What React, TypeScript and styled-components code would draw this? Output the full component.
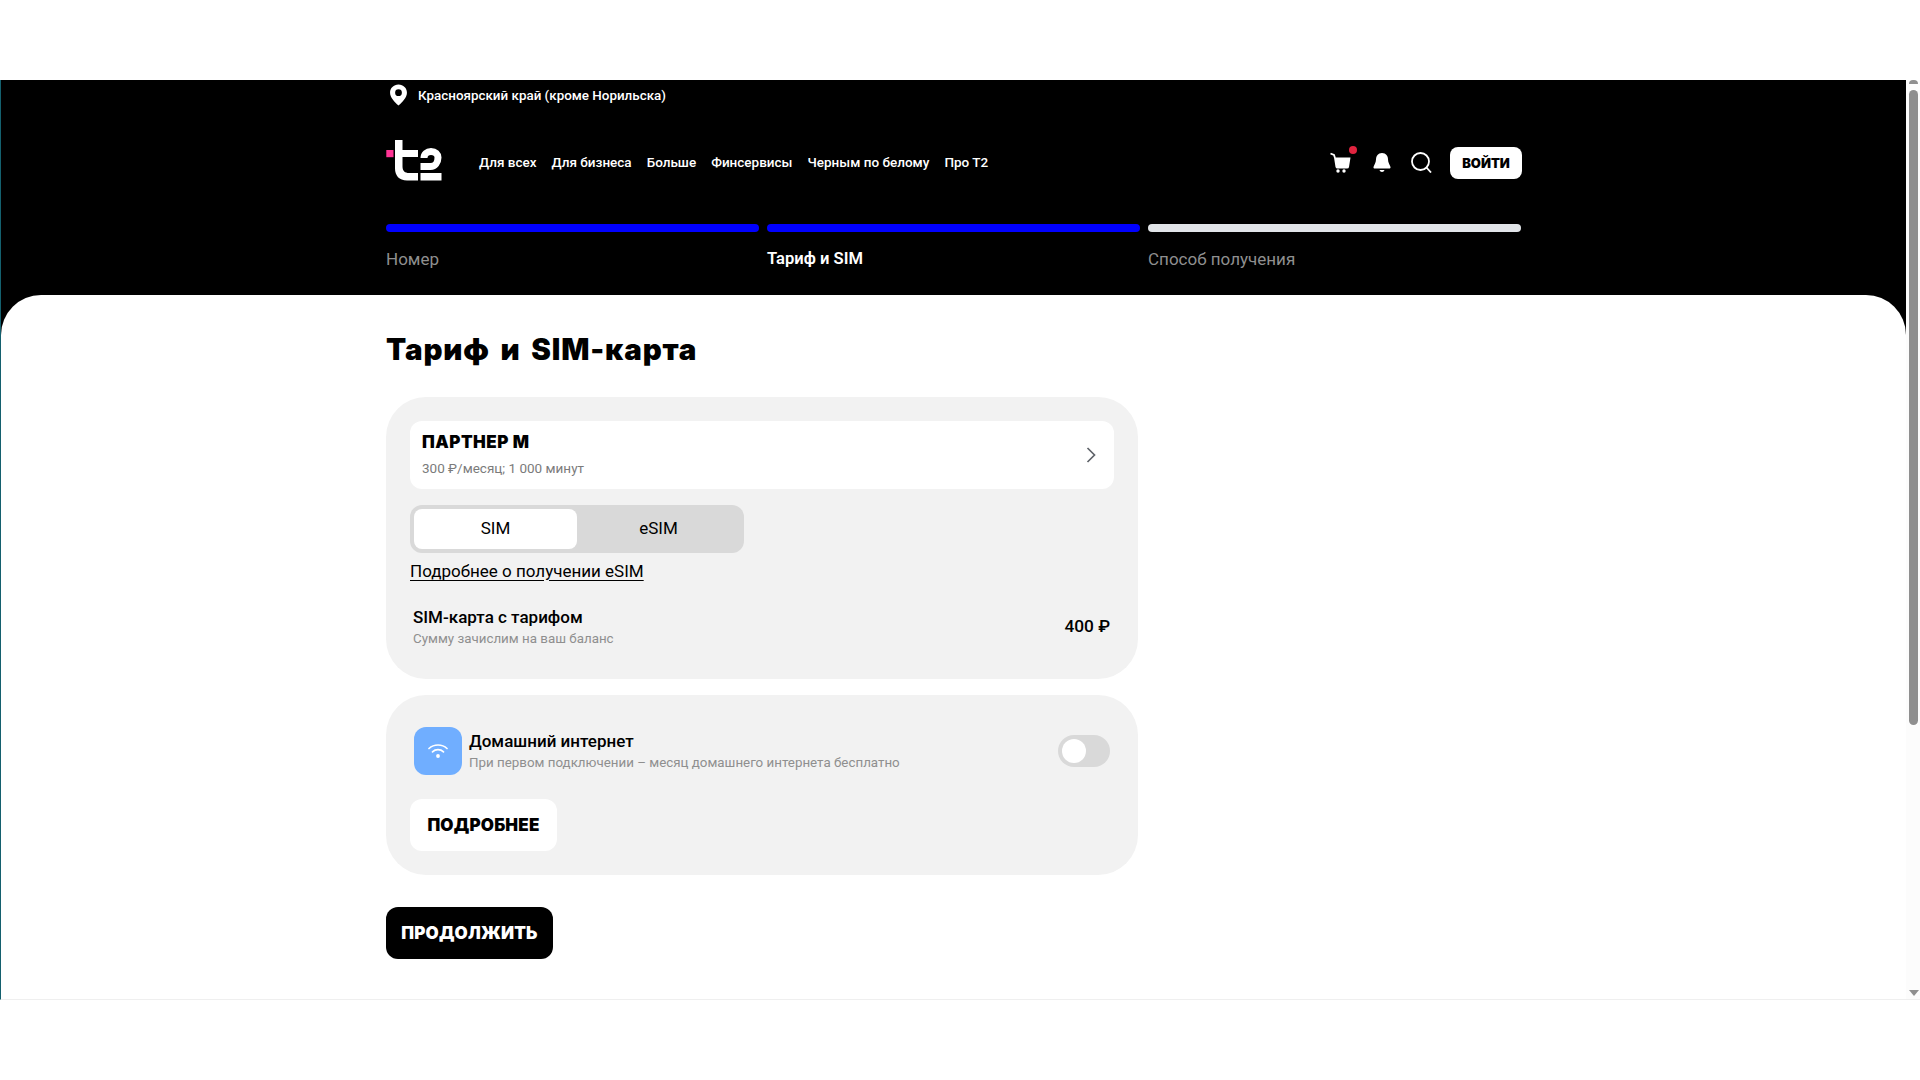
import { FunctionComponent } from "react";
import styled, { createGlobalStyle } from "styled-components";

const GlobalStyle = createGlobalStyle`
  html, body {
    margin: 0;
    padding: 0;
    height: 100%;
    background: #ffffff;
    overflow: hidden;
  }
  * {
    box-sizing: border-box;
  }
`;

const NAV_ITEMS = ["Для всех", "Для бизнеса", "Больше", "Финсервисы", "Черным по белому", "Про Т2"];

const STEPS = [
  { label: "Номер", done: true, current: false },
  { label: "Тариф и SIM", done: true, current: true },
  { label: "Способ получения", done: false, current: false },
];

const PinIcon = () => (
  <svg width="19" height="22" viewBox="0 0 18 20">
    <path
      fillRule="evenodd"
      fill="#fff"
      d="M9 0c4.6 0 8 3.4 8 7.8 0 4.4-4.3 8.7-8 12.2C5.3 16.500 1 12.200 1 7.800 1 3.400 4.400 0 9 0zm0 4.600a3.200 3.200 0 1 0 0 6.400 3.200 3.200 0 0 0 0-6.400z"
    />
  </svg>
);

const Logo = () => (
  <svg width="56" height="41" viewBox="0 0 56 41">
    <rect x="0.300" y="10" width="7.200" height="7.200" fill="#ff3495" />
    <path
      fill="#fff"
      d="M9 0h7.500v10h15.500v7H16.500v9.500c0 4.500 2.500 6.500 6.500 6.500h9v7.500H21c-8 0-12-5-12-12z"
    />
    <path
      fill="none"
      stroke="#fff"
      strokeWidth="7"
      d="M38 18c0-4 3-6.500 7-6.500 4.500 0 7 2.700 7 6 0 5-3 9-7.500 9H34.500"
    />
    <rect x="34.500" y="33" width="21" height="7.500" fill="#fff" />
  </svg>
);

const CartIcon = () => (
  <svg width="21" height="21" viewBox="0 0 21 21">
    <path fill="none" stroke="#fff" strokeWidth="1.800" d="M0.500 1.500l3.500 1.500 1 3" />
    <path fill="#fff" d="M4 5.500h16.500l-1.500 9.500q-.2 1.500-2 1.500H7.500q-1.600 0-2-1.500z" />
    <circle cx="8" cy="19" r="1.700" fill="#fff" />
    <circle cx="14" cy="19" r="1.700" fill="#fff" />
  </svg>
);

const BellIcon = () => (
  <svg width="18" height="20" viewBox="0 0 18 20">
    <path
      fill="#fff"
      d="M9 0c4 0 6 3 6 6.500 0 3.500 2 5.500 2.500 7.500.2 1-.5 1.500-1.500 1.500H2c-1 0-1.700-.5-1.500-1.500C1 12 3 10 3 6.500 3 3 5 0 9 0z"
    />
    <path fill="#fff" d="M6.500 17h5c-.3 1.300-1.300 2-2.500 2s-2.200-.7-2.500-2z" />
  </svg>
);

const SearchIcon = () => (
  <svg width="21" height="21" viewBox="0 0 21 21">
    <circle cx="9.500" cy="9.500" r="8.500" fill="none" stroke="#fff" strokeWidth="1.800" />
    <path fill="none" stroke="#fff" strokeWidth="1.800" d="M15.500 15.500l4.500 5" />
  </svg>
);

const ChevronIcon = () => (
  <svg width="10" height="16" viewBox="0 0 10 16">
    <path fill="none" stroke="#5f6369" strokeWidth="1.700" d="M1.500 1l7 7-7 7" />
  </svg>
);

const WifiIcon = () => (
  <svg width="20" height="16" viewBox="0 0 20 16">
    <g fill="none" stroke="#fff" strokeWidth="1.700" strokeLinecap="round">
      <path d="M1 5.500c5-4.700 13-4.700 18 0" />
      <path d="M4.500 8.800c3-2.800 8-2.800 11 0" />
    </g>
    <circle cx="10" cy="13" r="1.900" fill="#fff" />
  </svg>
);

const Strip = styled.div`
  height: 80px;
`;

const Window = styled.div`
  display: flex;
  height: 920px;
  border-left: 1px solid #14606e;
  border-bottom: 1px solid #efefef;
  overflow: hidden;
`;

const Page = styled.div`
  flex: 1;
  display: flex;
  flex-direction: column;
  background: #000000;
  font-family: Roboto, "Noto Sans", sans-serif;
`;

const ScrollTrack = styled.div`
  width: 14px;
  background: #fcfcfc;
  display: flex;
  flex-direction: column;
  align-items: center;
  padding-left: 1px;
`;

const ScrollUp = styled.div`
  width: 9px;
  height: 4px;
  border-radius: 4px 4px 0 0;
  background: #8f8f8f;
`;

const ScrollThumb = styled.div`
  width: 9px;
  height: 635px;
  margin-top: 6px;
  border-radius: 5px;
  background: #8f8f8f;
`;

const ScrollDown = styled.div`
  margin-top: 265px;
  width: 0;
  height: 0;
  border-left: 5px solid transparent;
  border-right: 5px solid transparent;
  border-top: 6px solid #8f8f8f;
`;

const Header = styled.header`
  height: 215px;
  padding-left: 385px;
  width: 1521px;
  color: #ffffff;
`;

const RegionRow = styled.div`
  display: flex;
  align-items: center;
  gap: 10px;
  height: 30px;
  padding-left: 3px;
  font-size: 13.400px;
  font-weight: 500;
`;

const TopBar = styled.div`
  display: flex;
  align-items: center;
  height: 45px;
  margin-top: 30px;
`;

const LogoLink = styled.a`
  display: flex;
  align-self: flex-start;
  width: 93px;
`;

const Nav = styled.nav`
  display: flex;
  gap: 15px;
  padding-bottom: 2px;
  font-size: 13.500px;
  font-weight: 500;
`;

const Actions = styled.div`
  display: flex;
  align-items: center;
  margin-left: auto;
  gap: 20px;
`;

const IconButton = styled.span`
  position: relative;
  display: flex;

  &:first-child {
    margin-right: 2px;
  }
`;

const Badge = styled.span`
  position: absolute;
  top: -6px;
  right: -6px;
  width: 8px;
  height: 8px;
  border-radius: 50%;
  background: #e0243f;
`;

const LoginButton = styled.button`
  width: 72px;
  height: 32px;
  margin-left: -2px;
  border: 0;
  border-radius: 8px;
  background: #ffffff;
  color: #000000;
  font-family: Inter, sans-serif;
  font-size: 13px;
  font-weight: 900;
  padding: 0;
`;

const Steps = styled.div`
  display: grid;
  grid-template-columns: repeat(3, 373px);
  gap: 8px;
  margin-top: 39px;
`;

const Step = styled.div`
  display: flex;
  flex-direction: column;
  gap: 17px;
`;

const StepBar = styled.div<{ $done: boolean }>`
  height: 8px;
  border-radius: 4px;
  background: ${({ $done }) => ($done ? "#0000ff" : "#e1e4e8")};
`;

const StepLabel = styled.div<{ $current: boolean }>`
  font-size: ${({ $current }) => ($current ? "16.600px" : "17px")};
  line-height: 20px;
  font-weight: ${({ $current }) => ($current ? 600 : 400)};
  color: ${({ $current }) => ($current ? "#ffffff" : "#8f8f8f")};
`;

const Panel = styled.main`
  flex: 1;
  background: #ffffff;
  border-radius: 40px 40px 0 0;
  padding: 36px 0 0 385px;
  color: #000000;
`;

const Title = styled.h1`
  margin: 0;
  height: 38px;
  font-family: Inter, sans-serif;
  font-size: 29.500px;
  line-height: 36px;
  font-weight: 900;
  letter-spacing: 0.850px;
  word-spacing: 4px;
`;

const Card = styled.section`
  width: 752px;
  margin-top: 16px;
  padding: 24px;
  border-radius: 40px;
  background: #f2f2f2;
`;

const FirstCard = styled(Card)`
  height: 282px;
  margin-top: 28px;
`;

const SecondCard = styled(Card)`
  height: 180px;
  padding-top: 32px;
`;

const TariffCard = styled.div`
  display: flex;
  align-items: center;
  justify-content: space-between;
  height: 68px;
  padding: 0 18px 0 12px;
  border-radius: 12px;
  background: #ffffff;
`;

const TariffHead = styled.div`
  padding-bottom: 3px;
`;

const TariffName = styled.div`
  font-family: Inter, sans-serif;
  font-size: 17px;
  line-height: 20px;
  font-weight: 900;
  letter-spacing: 0.500px;
`;

const TariffInfo = styled.div`
  margin-top: 8px;
  font-size: 13.500px;
  line-height: 16px;
  color: #7b7b7b;
`;

const SimSwitch = styled.div`
  display: grid;
  grid-template-columns: 163px 163px;
  width: 334px;
  height: 48px;
  margin-top: 16px;
  padding: 4px;
  border-radius: 12px;
  background: #d9d9d9;
`;

const SimOption = styled.div<{ $active: boolean }>`
  display: flex;
  align-items: center;
  justify-content: center;
  padding-bottom: 2px;
  border-radius: 8px;
  font-size: 17px;
  background: ${({ $active }) => ($active ? "#ffffff" : "transparent")};
`;

const MoreLink = styled.a`
  display: inline-block;
  margin-top: 7px;
  font-size: 17px;
  line-height: 22px;
  text-decoration: underline;
  text-underline-offset: 3px;
`;

const SimRow = styled.div`
  display: flex;
  align-items: center;
  justify-content: space-between;
  margin-top: 25px;
  padding: 0 4px 0 3px;
`;

const RowTitle = styled.div`
  font-size: 17px;
  line-height: 20px;
  font-weight: 500;
`;

const RowNote = styled.div`
  margin-top: 3px;
  font-size: 13.350px;
  line-height: 18px;
  color: #8f8f8f;
`;

const Price = styled.div`
  padding: 0 0 4px 0;
  font-size: 17.300px;
  font-weight: 500;
`;

const InternetRow = styled.div`
  display: flex;
  align-items: center;
  gap: 7px;
  padding: 0 4px;
`;

const InternetIcon = styled.div`
  display: flex;
  align-items: center;
  justify-content: center;
  flex: none;
  width: 48px;
  height: 48px;
  border-radius: 12px;
  background: #70aeff;
`;

const InternetText = styled.div`
  flex: 1;
`;

const Toggle = styled.div`
  display: flex;
  align-items: center;
  width: 52px;
  height: 32px;
  padding: 0 4px;
  border-radius: 16px;
  background: #d9d9d9;
`;

const Knob = styled.div`
  width: 24px;
  height: 24px;
  border-radius: 50%;
  background: #ffffff;
`;

const ActionButton = styled.button`
  display: block;
  height: 52px;
  border: 0;
  border-radius: 12px;
  padding: 0;
  font-family: Inter, sans-serif;
  font-size: 17px;
  font-weight: 900;
  letter-spacing: 0.200px;
`;

const DetailsButton = styled(ActionButton)`
  width: 147px;
  margin-top: 24px;
  background: #ffffff;
  color: #000000;
`;

const ContinueButton = styled(ActionButton)`
  width: 167px;
  margin-top: 32px;
  background: #000000;
  color: #ffffff;
`;

const Row: FunctionComponent<{ title: string; note: string }> = ({ title, note }) => (
  <div>
    <RowTitle>{title}</RowTitle>
    <RowNote>{note}</RowNote>
  </div>
);

export default function App() {
  return (
    <>
      <GlobalStyle />
      <Strip />
      <Window>
        <Page>
          <Header>
            <RegionRow>
              <PinIcon />
              Красноярский край (кроме Норильска)
            </RegionRow>
            <TopBar>
              <LogoLink>
                <Logo />
              </LogoLink>
              <Nav>
                {NAV_ITEMS.map((item) => (
                  <span key={item}>{item}</span>
                ))}
              </Nav>
              <Actions>
                <IconButton>
                  <CartIcon />
                  <Badge />
                </IconButton>
                <IconButton>
                  <BellIcon />
                </IconButton>
                <IconButton>
                  <SearchIcon />
                </IconButton>
                <LoginButton>ВОЙТИ</LoginButton>
              </Actions>
            </TopBar>
            <Steps>
              {STEPS.map((step) => (
                <Step key={step.label}>
                  <StepBar $done={step.done} />
                  <StepLabel $current={step.current}>{step.label}</StepLabel>
                </Step>
              ))}
            </Steps>
          </Header>
          <Panel>
            <Title>Тариф и SIM-карта</Title>
            <FirstCard>
              <TariffCard>
                <TariffHead>
                  <TariffName>ПАРТНЕР М</TariffName>
                  <TariffInfo>300 ₽/месяц; 1 000 минут</TariffInfo>
                </TariffHead>
                <ChevronIcon />
              </TariffCard>
              <SimSwitch>
                <SimOption $active>SIM</SimOption>
                <SimOption $active={false}>eSIM</SimOption>
              </SimSwitch>
              <MoreLink>Подробнее о получении eSIM</MoreLink>
              <SimRow>
                <Row title="SIM-карта с тарифом" note="Сумму зачислим на ваш баланс" />
                <Price>400 ₽</Price>
              </SimRow>
            </FirstCard>
            <SecondCard>
              <InternetRow>
                <InternetIcon>
                  <WifiIcon />
                </InternetIcon>
                <InternetText>
                  <Row
                    title="Домашний интернет"
                    note="При первом подключении – месяц домашнего интернета бесплатно"
                  />
                </InternetText>
                <Toggle>
                  <Knob />
                </Toggle>
              </InternetRow>
              <DetailsButton>ПОДРОБНЕЕ</DetailsButton>
            </SecondCard>
            <ContinueButton>ПРОДОЛЖИТЬ</ContinueButton>
          </Panel>
        </Page>
        <ScrollTrack>
          <ScrollUp />
          <ScrollThumb />
          <ScrollDown />
        </ScrollTrack>
      </Window>
    </>
  );
}
